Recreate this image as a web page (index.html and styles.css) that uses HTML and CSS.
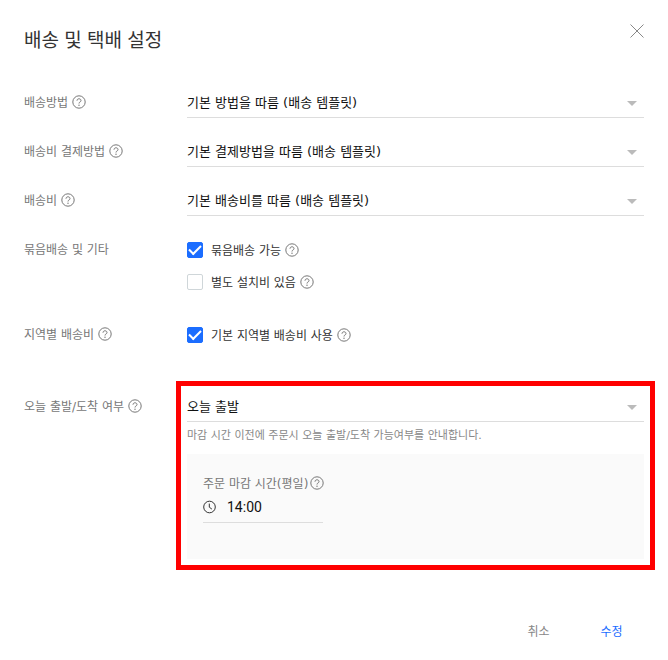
FILE: index.html
```html
<!DOCTYPE html>
<html lang="ko">
<head>
  <meta charset="UTF-8">
  <title>배송 및 택배 설정</title>
  <meta name="viewport" content="width=device-width, initial-scale=1.0">
  <link rel="stylesheet" href="styles.css">
</head>
<body>

  <svg class="defs" aria-hidden="true">
    <symbol id="help" viewBox="0 0 14 14">
      <circle cx="7" cy="7" r="6.200" fill="none" stroke="currentColor"/>
      <path d="M5 5.700C5 4.500 5.800 3.800 7 3.800s2 .7 2 1.700c0 .8-.5 1.200-1.100 1.600C7.300 7.500 7 7.700 7 8.500" fill="none" stroke="currentColor"/>
      <circle cx="7" cy="10.200" r=".7" fill="currentColor"/>
    </symbol>
  </svg>

  <form class="dialog">
    <header class="dialog-header">
      <h1>배송 및 택배 설정</h1>
      <button type="button" class="close" aria-label="닫기">
        <svg viewBox="0 0 14 14"><path d="M.5.5l13 13M13.500.500l-13 13" fill="none" stroke="currentColor"/></svg>
      </button>
    </header>

    <div class="row">
      <div class="row-label">
        <label for="method">배송방법</label>
        <svg class="help"><use href="#help"/></svg>
      </div>
      <div class="select">
        <select id="method"><option>기본 방법을 따름 (배송 템플릿)</option></select>
      </div>
    </div>

    <div class="row">
      <div class="row-label">
        <label for="payment">배송비 결제방법</label>
        <svg class="help"><use href="#help"/></svg>
      </div>
      <div class="select">
        <select id="payment"><option>기본 결제방법을 따름 (배송 템플릿)</option></select>
      </div>
    </div>

    <div class="row">
      <div class="row-label">
        <label for="fee">배송비</label>
        <svg class="help"><use href="#help"/></svg>
      </div>
      <div class="select">
        <select id="fee"><option>기본 배송비를 따름 (배송 템플릿)</option></select>
      </div>
    </div>

    <div class="row">
      <div class="row-label">묶음배송 및 기타</div>
      <div class="checks">
        <div class="check">
          <input type="checkbox" id="bundle" checked>
          <label for="bundle">묶음배송 가능</label>
          <svg class="help"><use href="#help"/></svg>
        </div>
        <div class="check">
          <input type="checkbox" id="install">
          <label for="install">별도 설치비 있음</label>
          <svg class="help"><use href="#help"/></svg>
        </div>
      </div>
    </div>

    <div class="row row-region">
      <div class="row-label">
        지역별 배송비
        <svg class="help"><use href="#help"/></svg>
      </div>
      <div class="check">
        <input type="checkbox" id="region" checked>
        <label for="region">기본 지역별 배송비 사용</label>
        <svg class="help"><use href="#help"/></svg>
      </div>
    </div>

    <div class="row row-today">
      <div class="row-label">
        <label for="today">오늘 출발/도착 여부</label>
        <svg class="help"><use href="#help"/></svg>
      </div>
      <div class="highlight">
        <div class="select">
          <select id="today"><option>오늘 출발</option></select>
        </div>
        <p class="hint">마감 시간 이전에 주문시 오늘 출발/도착 가능여부를 안내합니다.</p>
        <div class="panel">
          <div class="panel-label">
            <label for="deadline">주문 마감 시간(평일)</label>
            <svg class="help"><use href="#help"/></svg>
          </div>
          <div class="time">
            <svg viewBox="0 0 14 14"><circle cx="6.500" cy="7" r="5.800"/><path d="M6.300 3.600v3.600l2.600 1.900"/></svg>
            <input type="text" id="deadline" value="14:00">
          </div>
        </div>
      </div>
    </div>

    <footer class="actions">
      <button type="button">취소</button>
      <button type="submit" class="primary">수정</button>
    </footer>
  </form>

</body>
</html>
```
FILE: styles.css
```css
* {
  box-sizing: border-box;
}

body {
  margin: 0;
  background: #fff;
  color: #333;
  font-family: "DejaVu Sans", "Noto Sans CJK KR", sans-serif;
  font-size: 12px;
}

button,
select,
input {
  margin: 0;
  padding: 0;
  border: 0;
  background: none;
  font-family: inherit;
}

.defs {
  position: absolute;
  width: 0;
  height: 0;
}

.dialog {
  padding: 24px;
}

.dialog-header {
  display: flex;
  justify-content: space-between;
  align-items: flex-start;
  margin-bottom: 34px;
}

h1 {
  margin: 0;
  font-family: "Noto Sans CJK KR", sans-serif;
  font-size: 19px;
  font-weight: 400;
  line-height: 30px;
  color: #333;
}

.close {
  width: 14px;
  height: 14px;
  color: #888;
}

.close svg {
  display: block;
}

/* form rows */
.row {
  display: grid;
  grid-template-columns: 163px 1fr;
  margin-top: 19px;
}

.row-region {
  margin-top: 23px;
}

.row-today {
  margin-top: 42px;
}

.row-label,
.panel-label {
  display: flex;
  align-items: center;
  gap: 4px;
  height: 28px;
  color: #777;
}

.row-label,
.check label,
.panel-label label {
  padding-bottom: 1px;
}

.help {
  flex: none;
  width: 14px;
  height: 14px;
  color: #777;
}

.select {
  position: relative;
}

.select::after {
  content: "";
  position: absolute;
  top: 13px;
  right: 7px;
  border: 5px solid transparent;
  border-top-color: #bbb;
  border-bottom: 0;
  pointer-events: none;
}

select {
  display: block;
  width: 100%;
  height: 30px;
  border-bottom: 1px solid #ddd;
  border-radius: 0;
  appearance: none;
  font-size: 13px;
  color: #111;
}

/* checkboxes */
.checks {
  display: grid;
  gap: 2px;
}

.check {
  display: flex;
  align-items: center;
  gap: 4px;
  height: 30px;
}

.check input {
  display: grid;
  place-items: center;
  width: 16px;
  height: 16px;
  margin-right: 4px;
  border: 1px solid #cfd6d9;
  border-radius: 2px;
  appearance: none;
}

.check input:checked {
  border-color: #1b6dff;
  background: #1b6dff;
}

.check input:checked::before {
  content: "";
  width: 10px;
  height: 5px;
  margin-bottom: 4px;
  border: solid #fff;
  border-width: 0 0 2px 2px;
  transform: rotate(-45deg);
}

/* same-day shipping */
.highlight {
  margin: -11px;
  padding: 6px;
  border: 5px solid #f00;
}

.hint {
  margin: 4px 0 8px;
  font-size: 11px;
  line-height: 20px;
  color: #888;
}

.panel {
  padding: 16px 16px 36px;
  background: #fafafa;
}

.panel-label {
  gap: 2px;
  height: 26px;
}

.time {
  display: flex;
  align-items: center;
  gap: 10px;
  width: 120px;
  height: 27px;
  padding-bottom: 4px;
  border-bottom: 1px solid #ddd;
}

.time svg {
  flex: none;
  width: 14px;
  height: 14px;
  fill: none;
  stroke: #333;
}

.time input {
  width: 100%;
  font-family: Roboto, sans-serif;
  font-size: 14px;
  color: #111;
}

.actions {
  display: flex;
  justify-content: flex-end;
  gap: 8px;
  margin-top: 57px;
}

.actions button {
  width: 65px;
  height: 28px;
  font-size: 12px;
  color: #888;
}

.actions .primary {
  color: #1b6dff;
}
```
